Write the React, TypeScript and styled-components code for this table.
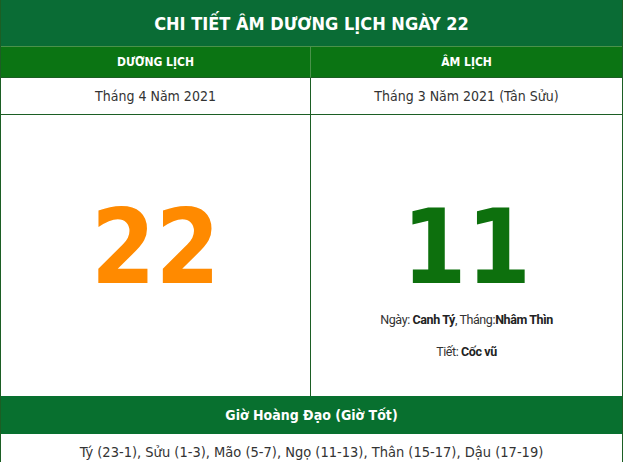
import React from "react";
import styled, { createGlobalStyle } from "styled-components";

const Global = createGlobalStyle`
  html, body { margin: 0; padding: 0; background: #ffffff; }
  body { font-family: "DejaVu Sans", sans-serif; font-stretch: condensed; }
`;

const Table = styled.div`
  width: 623px;
  box-sizing: border-box;
  border-left: 1px solid #1c5e24;
  border-right: 1px solid #1c5e24;
  display: flex;
  flex-direction: column;
`;

const Title = styled.div`
  height: 46px;
  background: #0a6c35;
  color: #fff;
  font-weight: bold;
  font-size: 18px;
  display: flex;
  align-items: center;
  justify-content: center;
`;

const Grid = styled.div`
  display: grid;
  grid-template-columns: 310px 1fr;
`;

const HeadCell = styled.div<{ $last?: boolean }>`
  height: 30px;
  background: #0b7413;
  border-top: 1px solid #4a924a;
  border-right: ${(p) => (p.$last ? "none" : "1px solid #4a924a")};
  border-bottom: 1px solid #1c5e24;
  color: #fff;
  font-weight: bold;
  font-size: 12px;
  display: flex;
  align-items: center;
  justify-content: center;
`;

const MonthCell = styled.div<{ $last?: boolean }>`
  height: 36px;
  border-right: ${(p) => (p.$last ? "none" : "1px solid #1c5e24")};
  border-bottom: 1px solid #1c5e24;
  color: #333;
  font-size: 14px;
  display: flex;
  align-items: center;
  justify-content: center;
`;

const BigCell = styled.div<{ $last?: boolean }>`
  height: 281px;
  border-right: ${(p) => (p.$last ? "none" : "1px solid #1c5e24")};
  display: flex;
  flex-direction: column;
  align-items: center;
  padding-top: 82px;
  box-sizing: border-box;
`;

const BigNumber = styled.div<{ $color: string }>`
  font-family: "DejaVu Sans", sans-serif;
  font-stretch: condensed;
  font-weight: bold;
  font-size: 103px;
  line-height: 100px;
  color: ${(p) => p.$color};
`;

const Info = styled.div<{ $gap: number }>`
  font-family: Roboto, sans-serif;
  font-stretch: normal;
  font-size: 12.5px;
  letter-spacing: -0.4px;
  line-height: 16px;
  color: #333;
  margin-top: ${(p) => p.$gap}px;
  b { font-weight: bold; color: #222; }
`;

const Band = styled.div`
  height: 38px;
  background: #08702f;
  color: #fff;
  font-weight: bold;
  font-size: 14px;
  display: flex;
  align-items: center;
  justify-content: center;
`;

const Hours = styled.div`
  height: 36px;
  color: #333;
  font-size: 14.5px;
  display: flex;
  align-items: center;
  justify-content: center;
`;

export default function App() {
  return (
    <>
      <Global />
      <Table>
        <Title>CHI TIẾT ÂM DƯƠNG LỊCH NGÀY 22</Title>
        <Grid>
          <HeadCell>DƯƠNG LỊCH</HeadCell>
          <HeadCell $last>ÂM LỊCH</HeadCell>
          <MonthCell>Tháng 4 Năm 2021</MonthCell>
          <MonthCell $last>Tháng 3 Năm 2021 (Tân Sửu)</MonthCell>
          <BigCell>
            <BigNumber $color="#ff8a00">22</BigNumber>
          </BigCell>
          <BigCell $last>
            <BigNumber $color="#0d700d">11</BigNumber>
            <Info $gap={15}>
              Ngày: <b>Canh Tý</b>, Tháng:<b>Nhâm Thìn</b>
            </Info>
            <Info $gap={16}>
              Tiết: <b>Cốc vũ</b>
            </Info>
          </BigCell>
        </Grid>
        <Band>Giờ Hoàng Đạo (Giờ Tốt)</Band>
        <Hours>Tý (23-1), Sửu (1-3), Mão (5-7), Ngọ (11-13), Thân (15-17), Dậu (17-19)</Hours>
      </Table>
    </>
  );
}
